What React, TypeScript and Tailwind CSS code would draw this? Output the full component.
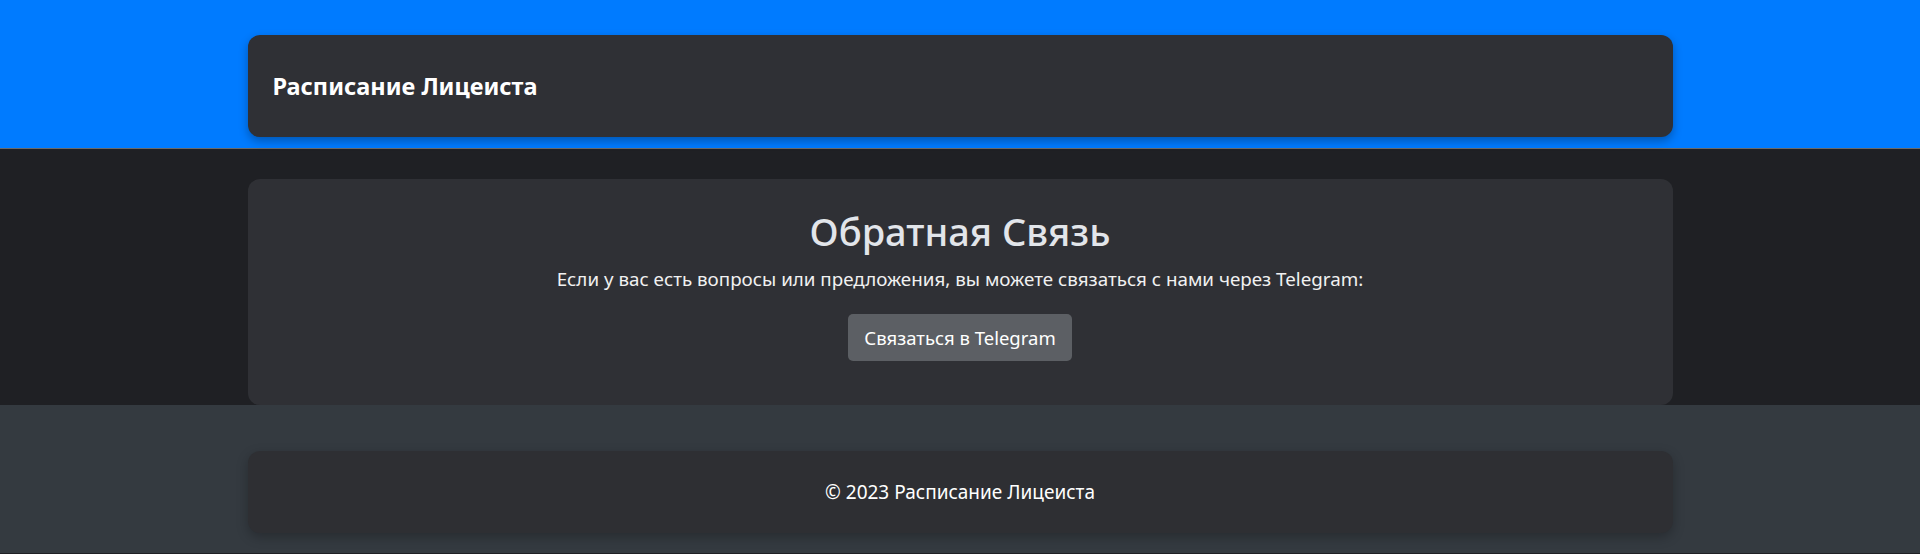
export default function App() {
  return (
    <div className="min-h-screen bg-[#1f2024] font-['Noto_Sans',sans-serif] text-white">
      {/* Header */}
      <header className="bg-[#007bff] pt-[35px] pb-[11px] border-b border-[#6a6a6a]">
        <div className="mx-auto w-[1425px] h-[102px] rounded-xl bg-[#2f3035] shadow-[0_4px_10px_rgba(0,0,0,0.3)] flex items-center px-[25px] pt-[2px]">
          <span className="text-[23.5px] font-bold">Расписание Лицеиста</span>
        </div>
      </header>

      {/* Feedback */}
      <main className="pt-[30px]">
        <section className="mx-auto w-[1425px] rounded-xl bg-[#2f3035] flex flex-col items-center pt-[28px] pb-[44px]">
          <h1 className="text-[38px] leading-[48px] font-medium text-[#e2e5ea] mb-[11px]">Обратная Связь</h1>
          <p className="text-[18.8px] leading-[27px] text-[#f1f1f1] mb-[21px]">
            Если у вас есть вопросы или предложения, вы можете связаться с нами через Telegram:
          </p>
          <button className="h-[47px] px-4 rounded-[5px] bg-[#5c5f64] text-[18.5px] text-white">
            Связаться в Telegram
          </button>
        </section>
      </main>

      {/* Footer */}
      <footer className="bg-[#343a40] pt-[46px] pb-[20px] border-b border-[#1f2024]">
        <div className="mx-auto w-[1425px] h-[82px] rounded-xl bg-[#2e2f33] shadow-[0_4px_12px_rgba(0,0,0,0.25)] flex items-center justify-center">
          <span className="text-[19px]">© 2023 Расписание Лицеиста</span>
        </div>
      </footer>
    </div>
  );
}
